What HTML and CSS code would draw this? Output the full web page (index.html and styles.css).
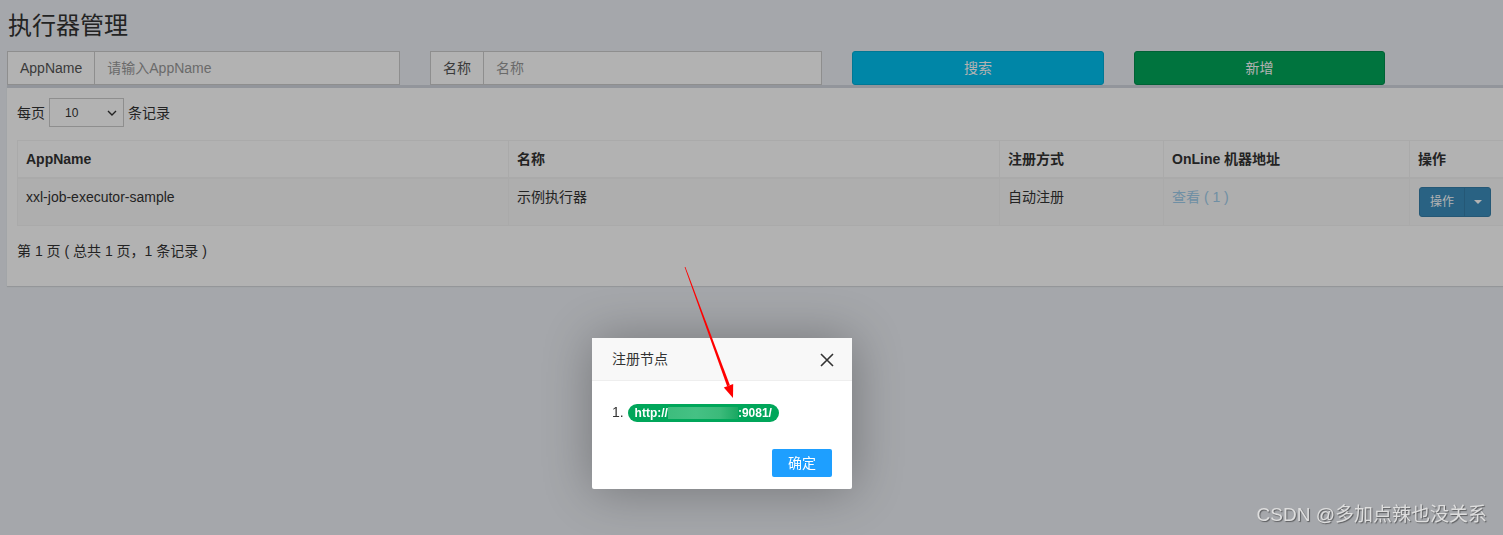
FILE: index.html
```html
<!DOCTYPE html>
<html lang="zh-CN">
<head>
  <meta charset="UTF-8" />
  <title>执行器管理</title>
  <link rel="stylesheet" href="styles.css">
</head>
<body>
  <div class="page">
    <h1 class="page-title">执行器管理</h1>

    <div class="filters">
      <div class="input-group">
        <span class="addon">AppName</span>
        <input type="text" placeholder="请输入AppName" />
      </div>
      <div class="input-group">
        <span class="addon">名称</span>
        <input type="text" placeholder="名称" />
      </div>
      <button class="btn btn-search">搜索</button>
      <button class="btn btn-add">新增</button>
    </div>

    <div class="box">
      <div class="length">
        每页
        <span class="select">10
          <svg width="10" height="6" viewBox="0 0 10 6"><path d="M1 1l4 4 4-4" fill="none" stroke="#333" stroke-width="1.4"/></svg>
        </span>
        条记录
      </div>

      <table class="grid">
        <colgroup>
          <col style="width:491px"><col style="width:491px"><col style="width:164px"><col style="width:246px"><col>
        </colgroup>
        <thead>
          <tr><th>AppName</th><th>名称</th><th>注册方式</th><th>OnLine 机器地址</th><th>操作</th></tr>
        </thead>
        <tbody>
          <tr>
            <td>xxl-job-executor-sample</td>
            <td>示例执行器</td>
            <td>自动注册</td>
            <td><a class="link" href="#">查看 ( 1 )</a></td>
            <td>
              <span class="btn-group">
                <span class="btn-op">操作</span><span class="btn-caret"><span class="caret"></span></span>
              </span>
            </td>
          </tr>
        </tbody>
      </table>

      <div class="info">第 1 页 ( 总共 1 页，1 条记录 )</div>
    </div>
  </div>

  <div class="shade"></div>

  <div class="layer">
    <div class="layer-title">注册节点
      <svg class="layer-close" width="14" height="14" viewBox="0 0 14 14"><path d="M1 1l12 12M13 1L1 13" stroke="#333" stroke-width="1.6"/></svg>
    </div>
    <div class="layer-content">
      1. <span class="badge">http://<span class="blur"></span>:9081/</span>
    </div>
    <div class="layer-btn"><a href="#">确定</a></div>
  </div>

  <svg class="arrow" width="80" height="150" viewBox="0 0 80 150">
    <polygon points="15.4,11.9 14.6,12.1 57.1,131.3 59.9,130.3" fill="#ff0000"/>
    <polygon points="63.2,129.1 53.8,132.5 63,143" fill="#ff0000"/>
  </svg>

  <div class="watermark">CSDN @多加点辣也没关系</div>
</body>
</html>
```

FILE: styles.css
```css
* {
  box-sizing: border-box;
}
html, body {
  margin: 0;
  height: 100%;
  overflow: hidden;
}
body {
  font-family: "Liberation Sans", "Noto Sans CJK SC", sans-serif;
  font-size: 14px;
  line-height: 20px;
  color: #333;
  background: #ecf0f5;
}
.page-title {
  margin: 11px 0 14px 8px;
  font-size: 24px;
  line-height: 26px;
  font-weight: normal;
  font-family: "Noto Sans CJK SC", sans-serif;
  color: #333;
}
.filters {
  display: flex;
  gap: 30px;
  padding-left: 7px;
  height: 34px;
}
.input-group {
  display: flex;
  width: 393px;
  height: 34px;
  border: 1px solid #ccc;
  background: #fff;
}
.input-group + .input-group {
  width: 392px;
}
.addon {
  padding: 6px 12px;
  border-right: 1px solid #ccc;
  color: #555;
}
.input-group input {
  flex: 1;
  min-width: 0;
  border: none;
  outline: none;
  background: transparent;
  padding: 6px 12px;
  font: inherit;
  color: #555;
}
.input-group input::placeholder {
  color: #999;
}
.btn {
  width: 252px;
  height: 34px;
  border-radius: 3px;
  font: inherit;
  color: #fff;
  cursor: pointer;
}
.btn-search {
  background: #00c0ef;
  border: 1px solid #00acd6;
}
.btn-add {
  width: 251px;
  background: #00a65a;
  border: 1px solid #008d4c;
}
.box {
  margin-left: 7px;
  background: #fff;
  border-top: 3px solid #d2d6de;
  box-shadow: 0 1px 1px rgba(0,0,0,0.1);
  padding: 10px 0 15px 10px;
  overflow: hidden;
}
.length {
  display: flex;
  align-items: center;
  gap: 4px;
  height: 29px;
}
.select {
  display: inline-flex;
  align-items: center;
  justify-content: space-between;
  width: 75px;
  height: 29px;
  padding: 0 6px 0 15px;
  border: 1px solid #ccc;
  font-size: 12px;
}
.grid {
  margin-top: 13px;
  border-collapse: collapse;
  table-layout: fixed;
  width: 100%;
  border: 1px solid #f4f4f4;
  border-right: none;
}
.grid th, .grid td {
  border: 1px solid #f4f4f4;
  padding: 8px;
  text-align: left;
  vertical-align: top;
}
.grid th:last-child, .grid td:last-child {
  border-right: none;
}
.grid th {
  font-weight: bold;
  border-bottom-width: 2px;
}
.grid tbody tr {
  background: #f9f9f9;
}
.link {
  color: #9fcdeb;
  text-decoration: none;
}
.btn-group {
  display: inline-flex;
  height: 30px;
  margin-left: 1px;
  border-radius: 3px;
  overflow: hidden;
  background: #3c8dbc;
  border: 1px solid #367fa9;
  color: #fff;
}
.btn-op {
  padding: 4px 10px;
  font-size: 12px;
  border-right: 1px solid #367fa9;
}
.btn-caret {
  width: 25px;
  display: flex;
  align-items: center;
  justify-content: center;
}
.caret {
  border-top: 4px solid #fff;
  border-left: 4px solid transparent;
  border-right: 4px solid transparent;
}
.info {
  padding: 15px 0 10px;
}
.shade {
  position: fixed;
  inset: 0;
  background: rgba(0,0,0,0.3);
}
.layer {
  position: absolute;
  left: 592px;
  top: 338px;
  width: 260px;
  background: #fff;
  box-shadow: 1px 1px 50px rgba(0,0,0,0.3);
  border-radius: 2px;
}
.layer-title {
  position: relative;
  height: 43px;
  line-height: 42px;
  padding: 0 80px 0 20px;
  background: #f8f8f8;
  border-bottom: 1px solid #eee;
  color: #333;
}
.layer-close {
  position: absolute;
  right: 18px;
  top: 15px;
}
.layer-content {
  padding: 20px;
  line-height: 23px;
  color: #333;
}
.badge {
  display: inline-block;
  padding: 3px 7px;
  font-size: 12px;
  font-weight: bold;
  line-height: 12px;
  color: #fff;
  background: #00a65a;
  border-radius: 10px;
}
.blur {
  display: inline-block;
  width: 70px;
  height: 12px;
  vertical-align: -2px;
  background: linear-gradient(90deg, #3dbd7d 0, #45c184 40%, #3bba7a 75%, #1aa862 100%);
}
.layer-btn {
  text-align: right;
  padding: 0 15px 12px;
}
.layer-btn a {
  display: inline-block;
  height: 28px;
  line-height: 28px;
  margin: 5px 5px 0;
  padding: 0 16px;
  background: #1e9fff;
  color: #fff;
  border-radius: 2px;
  text-decoration: none;
}
.arrow {
  position: absolute;
  left: 670px;
  top: 255px;
}
.watermark {
  position: absolute;
  right: 16px;
  bottom: 8px;
  font-size: 19px;
  line-height: 24px;
  color: #dedede;
  text-shadow: 1px 1px 1px rgba(0,0,0,0.45);
}
```
